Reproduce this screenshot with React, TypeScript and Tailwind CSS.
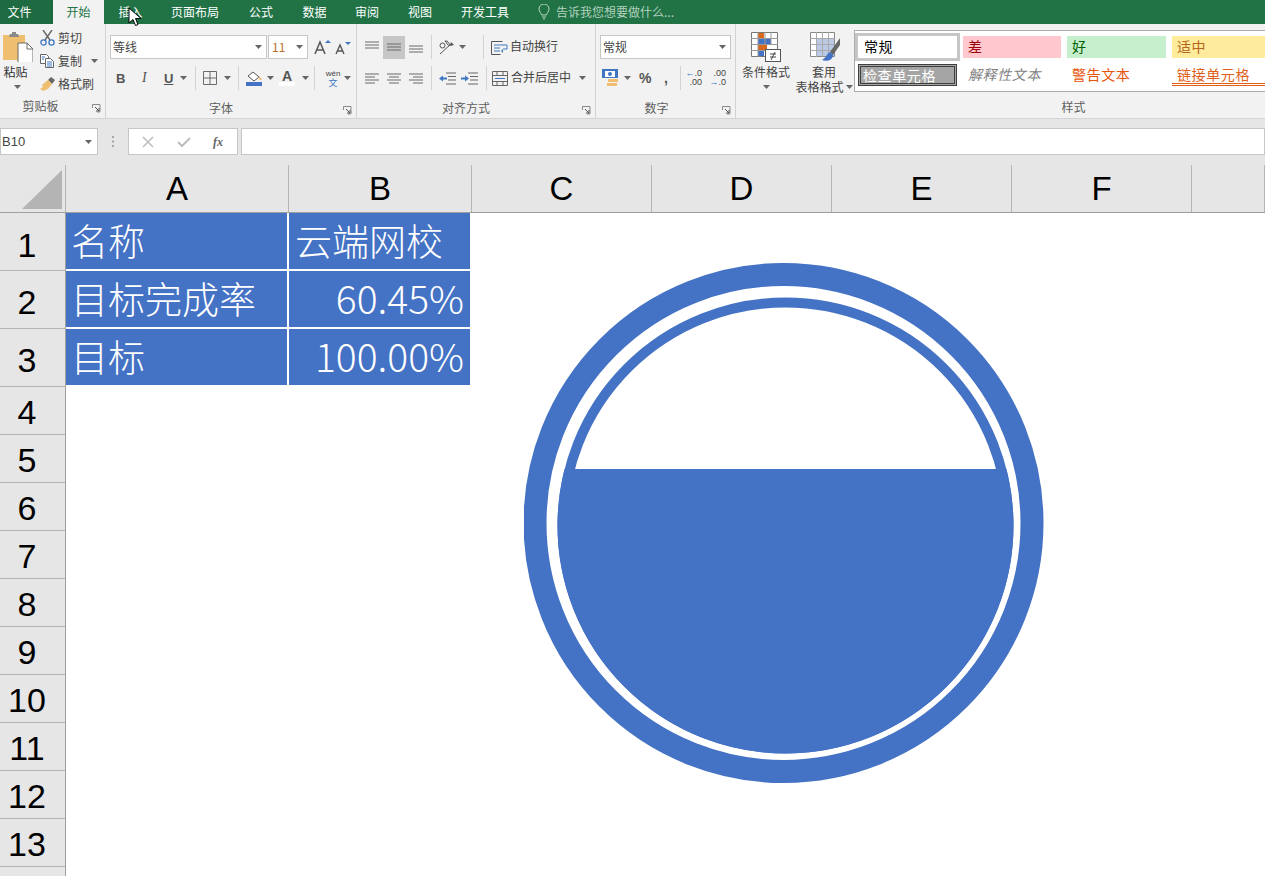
import React from "react";

const FONT = { fontFamily: '"Noto Sans CJK SC", "Liberation Sans", sans-serif' };

function Caret({ className = "" }: { className?: string }) {
  return (
    <svg width="7" height="4" viewBox="0 0 7 4" className={"shrink-0 " + className}>
      <path d="M0 0h7L3.5 4z" fill="#666" />
    </svg>
  );
}

function Launcher() {
  return (
    <svg width="9" height="9" viewBox="0 0 9 9" className="shrink-0 mt-[3px]">
      <path d="M.5 4V.5H8V8H5" fill="none" stroke="#8a8a8a" />
      <path d="M3 3l4 4M7 4v3H4" fill="none" stroke="#555" />
    </svg>
  );
}

function Sep({ className = "" }: { className?: string }) {
  return <div className={"w-px h-[24px] bg-[#d2d2d2] shrink-0 " + className} />;
}

function Lines({ d, x = 18, y = 14 }: { d: string; x?: number; y?: number }) {
  return (
    <svg width={x} height={y} viewBox={`0 0 ${x} ${y}`} className="shrink-0">
      <path d={d} stroke="#6b6b6b" strokeWidth="1" fill="none" />
    </svg>
  );
}

function GroupLabel({ text, className = "" }: { text: string; className?: string }) {
  return (
    <div className={"flex items-center h-[22px] shrink-0 " + className}>
      <div className="flex-1 text-center text-[12px] leading-none text-[#5f5f5f] pr-[11px] -mt-[2px]">{text}</div>
      <div className="w-[13px] shrink-0">
        <Launcher />
      </div>
    </div>
  );
}

function Combo({ text, className = "", textClass = "text-[#444]" }: { text: string; className?: string; textClass?: string }) {
  return (
    <div className={"h-[24px] bg-white border border-[#c6c6c6] flex items-center justify-between pl-[2px] pr-[4px] shrink-0 " + className}>
      <span className={"text-[12px] leading-none " + textClass}>{text}</span>
      <Caret />
    </div>
  );
}

function Paste() {
  return (
    <svg width="30" height="30" viewBox="0 0 30 30">
      <path d="M0 3h22v25H0z" fill="#efbe6e" />
      <path d="M7 2h2V0h4v2h2l1 3H6z" fill="#8a8a8a" />
      <path d="M15 11h9l6 6v14H15z" fill="#fff" stroke="#6b6b6b" />
      <path d="M24 11v6h6" fill="none" stroke="#6b6b6b" />
    </svg>
  );
}

function Clipboard() {
  return (
    <div className="w-[106px] shrink-0 flex flex-col border-r border-[#d2d2d2]">
      <div className="flex-1 flex pl-[3px] pt-[8px]">
        <div className="w-[30px] flex flex-col items-center shrink-0">
          <Paste />
          <span className="text-[12px] leading-none mt-[4px] text-[#333] -ml-[5px]">粘贴</span>
          <Caret className="mt-[7px] -ml-[2px]" />
        </div>
        <div className="flex flex-col text-[12px] leading-none text-[#444] ml-[7px] gap-[8px] -mt-[2px]">
          <div className="flex items-center gap-[3px] h-[15px]">
            <svg width="15" height="16" viewBox="0 0 15 16">
              <path d="M3 0l7 10M12 0L5 10" stroke="#666" strokeWidth="1.4" />
              <circle cx="3.5" cy="12.5" r="2.6" fill="none" stroke="#3f76c2" strokeWidth="1.3" />
              <circle cx="11.5" cy="12.5" r="2.6" fill="none" stroke="#3f76c2" strokeWidth="1.3" />
            </svg>
            <span>剪切</span>
          </div>
          <div className="flex items-center gap-[3px] h-[15px]">
            <svg width="15" height="14" viewBox="0 0 15 14">
              <path d="M.5.5h6l2 2v7h-8z" fill="#fff" stroke="#666" />
              <path d="M5.5 4.500h5l3 3v6h-8z" fill="#fff" stroke="#666" />
              <path d="M7 8h5M7 10h5M7 12h5M2 3h3M2 5h2" stroke="#3f76c2" />
            </svg>
            <span>复制</span>
            <Caret className="ml-[6px]" />
          </div>
          <div className="flex items-center gap-[3px] h-[15px]">
            <svg width="15" height="14" viewBox="0 0 15 14">
              <path d="M8 3l3-3 4 3-3 4z" fill="#666" />
              <path d="M8 3l4 4-4 5-5 2-3-2 3-2-1-2z" fill="#efbe6e" />
            </svg>
            <span>格式刷</span>
          </div>
        </div>
      </div>
      <GroupLabel text="剪贴板" />
    </div>
  );
}

function FontGroup() {
  return (
    <div className="w-[251px] shrink-0 flex flex-col border-r border-[#d2d2d2] pl-[4px]">
      <div className="flex items-center mt-[11px] h-[24px]">
        <Combo text="等线" className="w-[157px]" />
        <Combo text="11" className="w-[40px] ml-[1px] pl-[3px]" textClass="text-[#b86f2a]" />
        <svg width="18" height="16" viewBox="0 0 18 16" className="ml-[6px]">
          <path d="M1 15L6 3l5 12M3 11h6" fill="none" stroke="#555" strokeWidth="1.5" />
          <path d="M11 4l3-3 3 3z" fill="#3f76c2" />
        </svg>
        <svg width="16" height="14" viewBox="0 0 16 14" className="ml-[3px] mt-[1px]">
          <path d="M1 13L5 4l4 9M2.500 10h5" fill="none" stroke="#555" strokeWidth="1.4" />
          <path d="M10 1h6l-3 3z" fill="#3f76c2" />
        </svg>
      </div>
      <div className="flex items-center mt-[7px] h-[24px] pl-[6px] text-[#555]">
        <span className="w-[26px] text-[13px] font-bold leading-none" style={{ fontFamily: '"Liberation Sans"' }}>B</span>
        <span className="w-[22px] text-[14px] italic leading-none" style={{ fontFamily: '"Liberation Serif"' }}>I</span>
        <span className="w-[16px] text-[13px] font-bold underline leading-none" style={{ fontFamily: '"Liberation Sans"' }}>U</span>
        <Caret />
        <Sep className="ml-[8px]" />
        <svg width="14" height="14" viewBox="0 0 14 14" className="ml-[7px]">
          <path d="M.5.5h13v13H.5zM7 .5v13M.5 7h13" fill="none" stroke="#6b6b6b" />
        </svg>
        <Caret className="ml-[7px]" />
        <Sep className="ml-[7px]" />
        <div className="ml-[7px] flex flex-col items-center">
          <svg width="16" height="11" viewBox="0 0 16 11">
            <path d="M7 1l6 5-5 4-6-5z" fill="#fff" stroke="#555" />
            <path d="M13 6l2 3" stroke="#efbe6e" strokeWidth="2" />
          </svg>
          <div className="w-[16px] h-[4px] bg-[#4472c4]" />
        </div>
        <Caret className="ml-[5px]" />
        <div className="ml-[5px] flex flex-col items-center w-[16px]">
          <span className="text-[14px] font-bold leading-[12px]" style={{ fontFamily: '"Liberation Sans"' }}>A</span>
          <div className="w-[16px] h-[4px] bg-white" />
        </div>
        <Caret className="ml-[7px]" />
        <Sep className="ml-[5px]" />
        <div className="ml-[10px] w-[16px] flex flex-col items-center leading-none">
          <span className="text-[8px] text-[#444]" style={{ fontFamily: '"Liberation Sans"' }}>wén</span>
          <span className="text-[9px] text-[#3f76c2]">文</span>
        </div>
        <Caret className="ml-[3px]" />
      </div>
      <GroupLabel text="字体" className="mt-[8px]" />
    </div>
  );
}

const T3 = "M3 2h14M3 5h14M3 8h14";
const M3 = "M3 3h14M3 6h14M3 9h14";
const B3 = "M3 6h14M3 9h14M3 12h14";
const L4 = "M3 2h14M3 5h10M3 8h14M3 11h10";
const C4 = "M3 2h14M5 5h10M3 8h14M5 11h10";
const R4 = "M3 2h14M7 5h10M3 8h14M7 11h10";

function Align() {
  return (
    <div className="w-[239px] shrink-0 flex flex-col border-r border-[#d2d2d2] pl-[4px]">
      <div className="flex items-center mt-[11px] h-[24px] text-[12px] text-[#444]">
        <div className="w-[22px] flex justify-center"><Lines x={20} y={14} d={T3} /></div>
        <div className="w-[22px] h-[23px] bg-[#c6c6c6] flex items-center justify-center"><Lines x={20} y={12} d={M3} /></div>
        <div className="w-[22px] flex justify-center"><Lines x={20} y={14} d={B3} /></div>
        <Sep className="ml-[4px]" />
        <svg width="17" height="15" viewBox="0 0 17 15" className="ml-[7px]">
          <path d="M1 14L12 4" stroke="#555" />
          <path d="M12 2l3 3-4 1z" fill="#555" />
          <circle cx="3.500" cy="5.500" r="2.500" fill="none" stroke="#555" />
          <path d="M6 1l3 4c1 1 2 0 1.500-1L8 1z" fill="none" stroke="#555" />
        </svg>
        <Caret className="ml-[3px]" />
        <Sep className="ml-[17px]" />
        <svg width="17" height="15" viewBox="0 0 17 15" className="ml-[7px]">
          <path d="M.5 1.500h11M.5 1.500v13h9" fill="none" stroke="#555" />
          <path d="M3 5h13v4h-4M3 8h6M3 11h6" fill="none" stroke="#3f76c2" />
          <path d="M12 9l-2 2 2 2z" fill="#3f76c2" />
        </svg>
        <span className="ml-[2px] leading-none -mt-[2px]">自动换行</span>
      </div>
      <div className="flex items-center mt-[7px] h-[24px] text-[12px] text-[#444]">
        <div className="w-[22px] flex justify-center"><Lines x={20} y={13} d={L4} /></div>
        <div className="w-[22px] flex justify-center"><Lines x={20} y={13} d={C4} /></div>
        <div className="w-[22px] flex justify-center"><Lines x={20} y={13} d={R4} /></div>
        <Sep className="ml-[4px]" />
        <svg width="17" height="13" viewBox="0 0 17 13" className="ml-[7px]">
          <path d="M7 1h10M9 4.500h8M9 8h8M7 12h10" stroke="#666" fill="none" />
          <path d="M0 6.500l4-3v2h4v2H4v2z" fill="#3f76c2" />
        </svg>
        <svg width="17" height="13" viewBox="0 0 17 13" className="ml-[5px]">
          <path d="M7 1h10M9 4.500h8M9 8h8M7 12h10" stroke="#666" fill="none" />
          <path d="M8 6.500l-4-3v2H0v2h4v2z" fill="#3f76c2" />
        </svg>
        <Sep className="ml-[8px]" />
        <svg width="18" height="15" viewBox="0 0 18 15" className="ml-[5px] shrink-0">
          <path d="M.5.500h15v14H.5zM.5 4.500h15M.5 10.500h15M5 .5v4M11 .5v4M5 10.500v4M11 10.500v4" fill="none" stroke="#666" />
          <path d="M3 7.500h10" stroke="#3f76c2" />
        </svg>
        <span className="leading-none -mt-[2px] ml-[1px]">合并后居中</span>
        <Caret className="ml-[8px]" />
      </div>
      <GroupLabel text="对齐方式" className="mt-[8px]" />
    </div>
  );
}

function NumberGroup() {
  return (
    <div className="w-[140px] shrink-0 flex flex-col border-r border-[#d2d2d2] pl-[4px]">
      <Combo text="常规" className="w-[131px] mt-[11px]" />
      <div className="flex items-center mt-[7px] h-[24px] text-[#555]">
        <svg width="17" height="18" viewBox="0 0 17 18" className="ml-[2px]">
          <rect x="0" y="0" width="16" height="9" fill="#3f76c2" />
          <rect x="3" y="2" width="10" height="6" fill="#fff" />
          <circle cx="8" cy="5" r="2" fill="#3f76c2" />
          <rect x="6" y="10" width="10" height="3" fill="#efbe6e" />
          <rect x="5" y="14" width="10" height="3" fill="#efbe6e" />
        </svg>
        <Caret className="ml-[5px]" />
        <span className="ml-[8px] text-[14px] leading-none font-bold w-[16px]" style={{ fontFamily: '"Liberation Sans"' }}>%</span>
        <span className="ml-[9px] text-[14px] leading-none font-bold w-[8px]" style={{ fontFamily: '"Liberation Sans"' }}>,</span>
        <Sep className="ml-[8px]" />
        <div className="ml-[7px] w-[14px] flex flex-col items-end text-[9px] leading-[9px] text-[#444]" style={{ fontFamily: '"Liberation Sans"' }}>
          <span className="flex items-center"><span className="text-[#3f76c2] text-[9px]">←</span>.0</span>
          <span>.00</span>
        </div>
        <div className="ml-[10px] w-[14px] flex flex-col items-end text-[9px] leading-[9px] text-[#444]" style={{ fontFamily: '"Liberation Sans"' }}>
          <span>.00</span>
          <span className="flex items-center"><span className="text-[#3f76c2] text-[9px]">→</span>.0</span>
        </div>
      </div>
      <GroupLabel text="数字" className="mt-[8px] pl-[2px]" />
    </div>
  );
}

function Styles() {
  return (
    <div className="flex-1 flex flex-col min-w-0">
      <div className="flex pt-[6px] h-[72px]">
        <div className="w-[60px] flex flex-col items-center shrink-0">
          <svg width="30" height="30" viewBox="0 0 30 30" className="mt-[2px]">
            <path d="M.5.500h26v24H.5z" fill="#fff" stroke="#777" />
            <rect x="7" y="1" width="6" height="5" fill="#d9681d" />
            <rect x="7" y="7" width="13" height="5" fill="#4472c4" />
            <rect x="7" y="13" width="9" height="5" fill="#d9681d" />
            <rect x="7" y="19" width="6" height="5" fill="#4472c4" />
            <path d="M7 0v25M14 0v12M20 0v12M0 6.500h27M0 12.500h27M0 18.500h14" stroke="#999" fill="none" />
            <rect x="14.500" y="17.500" width="15" height="12" fill="#fff" stroke="#555" />
            <path d="M19 22h6M19 25h6M24 20l-4 8" stroke="#444" fill="none" />
          </svg>
          <span className="text-[12px] leading-none mt-[4px] text-[#444] whitespace-nowrap">条件格式</span>
          <Caret className="mt-[7px]" />
        </div>
        <div className="w-[58px] flex flex-col items-center shrink-0">
          <svg width="30" height="30" viewBox="0 0 30 30" className="mt-[2px]">
            <path d="M.5.500h24v24H.5z" fill="#fff" stroke="#888" />
            <rect x="7" y="7" width="17" height="17" fill="#b9c9e6" />
            <path d="M.5 6.500h24M.5 12.500h24M.5 18.500h24M6.500 0v25M12.500 0v25M18.500 0v25" stroke="#aaa" fill="none" />
            <path d="M30 6L20 20l3 3L30 13z" fill="#666" />
            <path d="M20 20c-3 1-3 5-8 8 5 2 11 0 11-5z" fill="#4472c4" />
          </svg>
          <span className="text-[12px] leading-none mt-[4px] text-[#444] -ml-[2px]">套用</span>
          <div className="flex items-center mt-[3px] -ml-[2px]">
            <span className="text-[12px] leading-none text-[#444] whitespace-nowrap">表格格式</span>
            <Caret className="ml-[2px]" />
          </div>
        </div>
        <div className="flex-1 min-w-0 h-[62px] bg-white border border-[#ababab] border-r-0 pt-[2px] overflow-hidden">
          <div className="grid grid-cols-[108px_104px_105px_105px] gap-y-[3px] text-[14px] leading-none tracking-[0.6px]">
            <div className="h-[28px] w-[105px] border-[3px] border-[#c6c6c6] flex items-center pl-[6px] pb-[2px] text-black">常规</div>
            <div className="h-[22px] mt-[3px] w-[98px] bg-[#ffc7ce] flex items-center pl-[5px] pb-[2px] text-[#9c0006]">差</div>
            <div className="h-[22px] mt-[3px] w-[99px] bg-[#c6efce] flex items-center pl-[5px] pb-[2px] text-[#006100]">好</div>
            <div className="h-[22px] mt-[3px] w-[100px] bg-[#ffeb9c] flex items-center pl-[5px] pb-[2px] text-[#b5651d]">适中</div>
            <div className="h-[22px] w-[99px] ml-[3px] bg-[#a5a5a5] border-[3px] border-double border-[#3f3f3f] flex items-center pl-[2px] text-white whitespace-nowrap">检查单元格</div>
            <div className="h-[22px] flex items-center pl-[5px] pb-[2px] text-[#7f7f7f] italic whitespace-nowrap">解释性文本</div>
            <div className="h-[22px] flex items-center pl-[5px] pb-[2px] text-[#e8540a] whitespace-nowrap">警告文本</div>
            <div className="h-[22px] flex items-center pl-[5px] text-[#e0601a] border-b-[3px] border-double border-[#e0601a] whitespace-nowrap">链接单元格</div>
          </div>
        </div>
      </div>
      <div className="flex justify-center items-center h-[22px] text-[12px] leading-none text-[#5f5f5f] pl-[146px]">样式</div>
    </div>
  );
}

const TABS: [string, string][] = [
  ["页面布局", "w-[76px]"],
  ["公式", "w-[56px]"],
  ["数据", "w-[51px]"],
  ["审阅", "w-[54px]"],
  ["视图", "w-[52px]"],
  ["开发工具", "w-[78px]"],
];

function TabBar() {
  return (
    <div className="h-[24px] bg-[#217346] flex items-center text-[12px] leading-none text-white">
      <div className="w-[53px] h-full bg-[#1e6b41] flex items-center justify-center pr-[14px]">文件</div>
      <div className="w-[51px] h-full bg-[#f1f2f1] text-[#217346] flex items-center justify-center">开始</div>
      <div className="w-[53px] h-full flex items-center justify-center">插入</div>
      {TABS.map(([t, w]) => (
        <div key={t} className={"h-full flex items-center justify-center " + w}>{t}</div>
      ))}
      <svg width="14" height="16" viewBox="0 0 14 16" className="ml-[13px]">
        <path d="M4.500 11c0-2-2.500-3-2.500-6a5 5 0 0 1 10 0c0 3-2.500 4-2.500 6zM5 13h4M6 15h2" fill="none" stroke="#b9d4c4" />
      </svg>
      <span className="ml-[5px] text-[#b3d1bf]">告诉我您想要做什么...</span>
    </div>
  );
}

function FormulaBar() {
  return (
    <div className="h-[47px] bg-[#e6e6e6] flex items-start pt-[9px] border-t border-[#d4d4d4]">
      <div className="w-[98px] h-[27px] bg-white border border-[#c6c6c6] flex items-center justify-between pl-[1px] pr-[5px] text-[13px] text-[#444]" style={{ fontFamily: '"Liberation Sans"' }}>
        <span>B10</span>
        <Caret />
      </div>
      <div className="w-[30px] h-[27px] flex items-center justify-center">
        <svg width="3" height="11" viewBox="0 0 3 11"><path d="M0 0h2v2H0zM0 4.500h2v2H0zM0 9h2v2H0z" fill="#a6a6a6" /></svg>
      </div>
      <div className="w-[110px] h-[27px] bg-white border border-[#c6c6c6] flex items-center text-[#999]">
        <svg width="12" height="12" viewBox="0 0 12 12" className="ml-[13px]"><path d="M1 1l10 10M11 1L1 11" stroke="#bdbdbd" strokeWidth="1.500" /></svg>
        <svg width="14" height="12" viewBox="0 0 14 12" className="ml-[23px]"><path d="M1 6l4 4 8-8" stroke="#bdbdbd" strokeWidth="2" fill="none" /></svg>
        <span className="ml-[22px] text-[12px] italic font-bold text-[#666] leading-none" style={{ fontFamily: '"Liberation Serif"' }}>fx</span>
      </div>
      <div className="flex-1 h-[27px] ml-[3px] bg-white border border-[#c6c6c6]" />
    </div>
  );
}

const COLS: [string, string][] = [
  ["A", "w-[223px]"],
  ["B", "w-[183px]"],
  ["C", "w-[180px]"],
  ["D", "w-[180px]"],
  ["E", "w-[180px]"],
  ["F", "w-[180px]"],
  ["", "flex-1"],
];

const ROWS: [string, string][] = [
  ["1", "h-[58px] pt-[7px]"], ["2", "h-[58px] pt-[4px]"], ["3", "h-[58px] pt-[4px]"], ["4", "h-[48px] pt-[2px]"], ["5", "h-[48px] pt-[2px]"],
  ["6", "h-[48px] pt-[2px]"], ["7", "h-[48px] pt-[2px]"], ["8", "h-[48px] pt-[2px]"], ["9", "h-[48px] pt-[2px]"], ["10", "h-[48px] pt-[2px]"],
  ["11", "h-[48px] pt-[2px]"], ["12", "h-[48px] pt-[2px]"], ["13", "h-[48px] pt-[2px]"], ["", "h-[48px]"],
];

const DATA: [string, string, boolean][] = [
  ["名称", "云端网校", false],
  ["目标完成率", "60.45%", true],
  ["目标", "100.00%", true],
];

function Sheet() {
  return (
    <div className="relative h-[711px] overflow-hidden bg-white">
      <div className="flex h-[48px] bg-[#e6e6e6] border-b border-[#9f9f9f]">
        <div className="w-[66px] shrink-0 border-r border-[#b5b5b5] flex items-end justify-end pr-[3px] pb-[3px]">
          <svg width="40" height="39" viewBox="0 0 40 39"><path d="M40 0v39H0z" fill="#b4b4b4" /></svg>
        </div>
        {COLS.map(([c, w], i) => (
          <div key={i} className={"flex items-center justify-center border-r border-[#b5b5b5] text-[33px] leading-none text-black " + w} style={{ fontFamily: '"Liberation Sans"' }}>
            {c}
          </div>
        ))}
      </div>
      <div className="flex">
        <div className="w-[66px] shrink-0 flex flex-col bg-[#e6e6e6] border-r border-[#9f9f9f]">
          {ROWS.map(([r, h], i) => (
            <div key={i} className={"flex items-center justify-center border-b border-[#b5b5b5] text-[34px] leading-none text-black pr-[11px] shrink-0 " + h} style={{ fontFamily: '"Liberation Sans"' }}>
              {r}
            </div>
          ))}
        </div>
        <div className="flex flex-col">
          {DATA.map(([a, b, num]) => (
            <div key={a} className="flex h-[58px] text-[37px] leading-none text-white font-light">
              <div className="w-[221px] h-[56px] mr-[2px] bg-[#4472c4] flex items-center pl-[5px] pb-[1px] whitespace-nowrap">{a}</div>
              {num ? (
                <div className="w-[181px] h-[56px] bg-[#4472c4] flex items-center justify-end pr-[6px] pb-[3px] whitespace-nowrap text-[39px]">{b}</div>
              ) : (
                <div className="w-[181px] h-[56px] bg-[#4472c4] flex items-center pl-[6px] pb-[1px] whitespace-nowrap">{b}</div>
              )}
            </div>
          ))}
        </div>
      </div>
      <svg width="522" height="520" viewBox="0 0 522 520" className="absolute left-[524px] top-[98px]">
        <circle cx="259.500" cy="260" r="248.500" fill="none" stroke="#4472c4" strokeWidth="23" />
        <circle cx="261.500" cy="262.500" r="223" fill="none" stroke="#4472c4" strokeWidth="10" />
        <path d="M40.600 206A228 228 0 1 0 482.400 206Z" fill="#4472c4" />
      </svg>
    </div>
  );
}

export default function App() {
  return (
    <div className="relative w-[1265px] h-[876px] overflow-hidden bg-white" style={FONT}>
      <TabBar />
      <div className="h-[94px] bg-[#f1f2f1] flex">
        <Clipboard />
        <FontGroup />
        <Align />
        <NumberGroup />
        <Styles />
      </div>
      <FormulaBar />
      <Sheet />
      <svg width="14" height="20" viewBox="0 0 14 20" className="absolute left-[128px] top-[7px]">
        <path d="M1 1v15l4-3.500 2.500 6 2.500-1-2.500-6H13z" fill="#fff" stroke="#000" />
      </svg>
    </div>
  );
}
